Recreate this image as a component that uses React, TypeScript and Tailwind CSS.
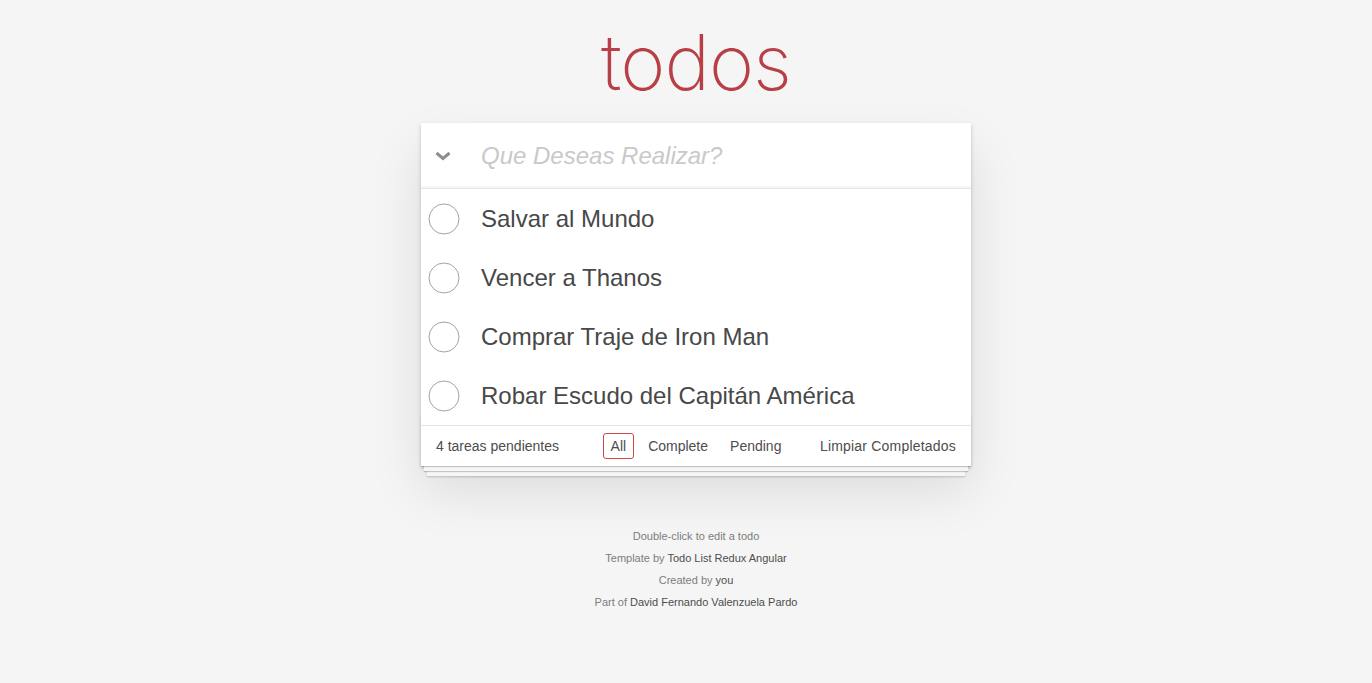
import { useState } from "react";

type Todo = { id: number; text: string; done: boolean };

const initialTodos: Todo[] = [
  { id: 1, text: "Salvar al Mundo", done: false },
  { id: 2, text: "Vencer a Thanos", done: false },
  { id: 3, text: "Comprar Traje de Iron Man", done: false },
  { id: 4, text: "Robar Escudo del Capitán América", done: false },
];

const filters = ["All", "Complete", "Pending"];

function Circle() {
  return (
    <svg width="32" height="32" viewBox="0 0 32 32" className="shrink-0">
      <circle cx="16" cy="16" r="15" fill="none" stroke="#a3a3a3" strokeWidth="1" />
    </svg>
  );
}

export default function App() {
  const [todos] = useState<Todo[]>(initialTodos);
  const [filter, setFilter] = useState("All");
  const pending = todos.filter((t) => !t.done).length;

  return (
    <div className="min-h-screen bg-[#f5f5f5] pl-5 text-[#4d4d4d] font-['Helvetica_Neue','Liberation_Sans',Arial,sans-serif] text-sm">
      <div className="mx-auto w-[550px] pt-[22px]">
        <h1 className="h-[80px] text-center text-[77px] leading-[80px] font-extralight text-[#b83f45] font-['Inter','Liberation_Sans',sans-serif] tracking-[-1px]">
          todos
        </h1>

        <section className="relative mt-[21px] bg-white shadow-[0_2px_4px_0_rgba(0,0,0,0.2),0_25px_50px_0_rgba(0,0,0,0.1)]">
          <div className="flex h-[65px] items-center shadow-[inset_0_-2px_1px_rgba(0,0,0,0.03)]">
            <div className="flex w-[60px] justify-start pl-[14px]">
              <svg width="16" height="10" viewBox="0 0 16 10">
                <polyline points="1.5,2 8,7.5 14.5,2" fill="none" stroke="#8f8f8f" strokeWidth="3" />
              </svg>
            </div>
            <input
              className="h-full flex-1 bg-transparent pr-4 text-2xl italic text-[#4d4d4d] outline-none placeholder:text-[#c9c9c9]"
              placeholder="Que Deseas Realizar?"
            />
          </div>

          <ul className="border-t border-[#e6e6e6]">
            {todos.map((todo) => (
              <li key={todo.id} className="flex h-[59px] items-center">
                <div className="flex w-[60px] justify-start pl-[7px]">
                  <Circle />
                </div>
                <span className="text-2xl text-[#484848]">{todo.text}</span>
              </li>
            ))}
          </ul>

          <footer className="relative h-[41px] border-t border-[#e6e6e6]">
            <div className="absolute inset-x-0 bottom-0 h-[50px] overflow-hidden shadow-[0_1px_1px_rgba(0,0,0,0.2),0_8px_0_-3px_#f6f6f6,0_9px_1px_-3px_rgba(0,0,0,0.2),0_16px_0_-6px_#f6f6f6,0_17px_2px_-6px_rgba(0,0,0,0.2)]" />
            <div className="relative grid h-full grid-cols-[1fr_auto_1fr] items-center bg-white px-[15px] pb-[1px]">
              <span>
                {pending} tareas pendientes
              </span>
              <ul className="flex items-center">
                {filters.map((f) => (
                  <li key={f}>
                    <button
                      onClick={() => setFilter(f)}
                      className={
                        "mx-[3px] rounded-[3px] border px-[7px] py-[2px] leading-[20px] " +
                        (filter === f ? "border-[#ce4646]" : "border-transparent")
                      }
                    >
                      {f}
                    </button>
                  </li>
                ))}
              </ul>
              <button className="justify-self-end leading-[20px] tracking-[0.2px]">Limpiar Completados</button>
            </div>
          </footer>
        </section>

        <footer className="mt-[65px] text-center text-[11px] leading-none text-[#7d7d7d]">
          <p className="mb-[11px]">Double-click to edit a todo</p>
          <p className="mb-[11px]">
            Template by <a className="text-[#4d4d4d]">Todo List Redux Angular</a>
          </p>
          <p className="mb-[11px]">
            Created by <a className="text-[#4d4d4d]">you</a>
          </p>
          <p>
            Part of <a className="text-[#4d4d4d]">David Fernando Valenzuela Pardo</a>
          </p>
        </footer>
      </div>
    </div>
  );
}
